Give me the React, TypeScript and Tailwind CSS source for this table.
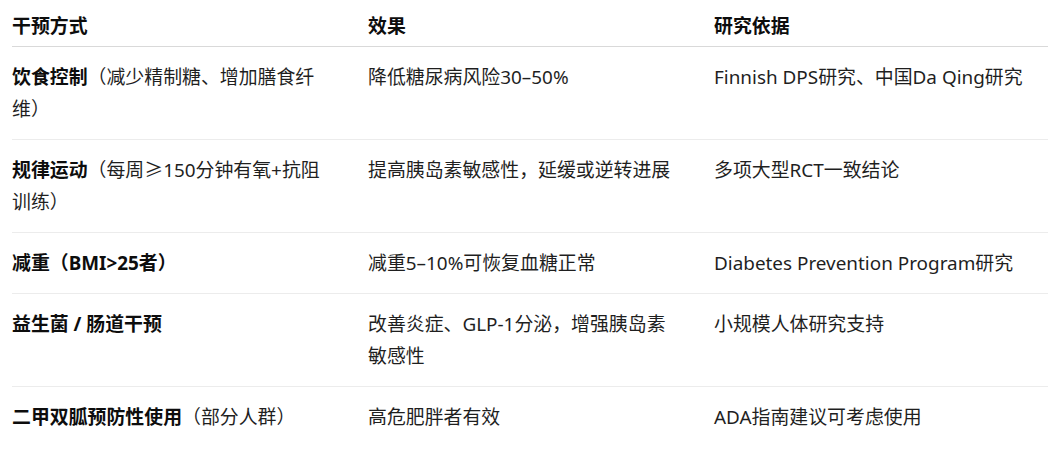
const rows: { label: string; note?: string; effect: string; source: string }[] = [
  {
    label: "饮食控制",
    note: "（减少精制糖、增加膳食纤维）",
    effect: "降低糖尿病风险30–50%",
    source: "Finnish DPS研究、中国Da Qing研究",
  },
  {
    label: "规律运动",
    note: "（每周≥150分钟有氧+抗阻训练）",
    effect: "提高胰岛素敏感性，延缓或逆转进展",
    source: "多项大型RCT一致结论",
  },
  {
    label: "减重（BMI>25者）",
    effect: "减重5–10%可恢复血糖正常",
    source: "Diabetes Prevention Program研究",
  },
  {
    label: "益生菌 / 肠道干预",
    effect: "改善炎症、GLP-1分泌，增强胰岛素敏感性",
    source: "小规模人体研究支持",
  },
  {
    label: "二甲双胍预防性使用",
    note: "（部分人群）",
    effect: "高危肥胖者有效",
    source: "ADA指南建议可考虑使用",
  },
];

export default function App() {
  return (
    <div
      className="w-[1058px] h-[449px] overflow-hidden bg-white text-[#1f1f1f] text-[18.9px] leading-[32px]"
      style={{ fontFamily: '"Noto Sans", "Noto Sans CJK SC", sans-serif' }}
    >
      <div className="ml-[12px] w-[1036px]">
        {/* Header */}
        <div className="grid grid-cols-[356px_346px_334px] border-b border-[#d9d9d9] pt-[10px] pb-[4px] font-bold text-[#0d0d0d]">
          <div className="pr-[40px]">干预方式</div>
          <div className="pr-[40px]">效果</div>
          <div>研究依据</div>
        </div>

        {rows.map((r, i) => (
          <div
            key={r.label}
            className={
              "grid grid-cols-[356px_346px_334px] py-[14px] " +
              (i < rows.length - 1 ? "border-b border-[#ececec]" : "")
            }
          >
            <div className="pr-[40px]">
              <span className="font-bold text-[#0d0d0d]">{r.label}</span>
              {r.note && <span>{r.note}</span>}
            </div>
            <div className="pr-[40px]">{r.effect}</div>
            <div>{r.source}</div>
          </div>
        ))}
      </div>
    </div>
  );
}
